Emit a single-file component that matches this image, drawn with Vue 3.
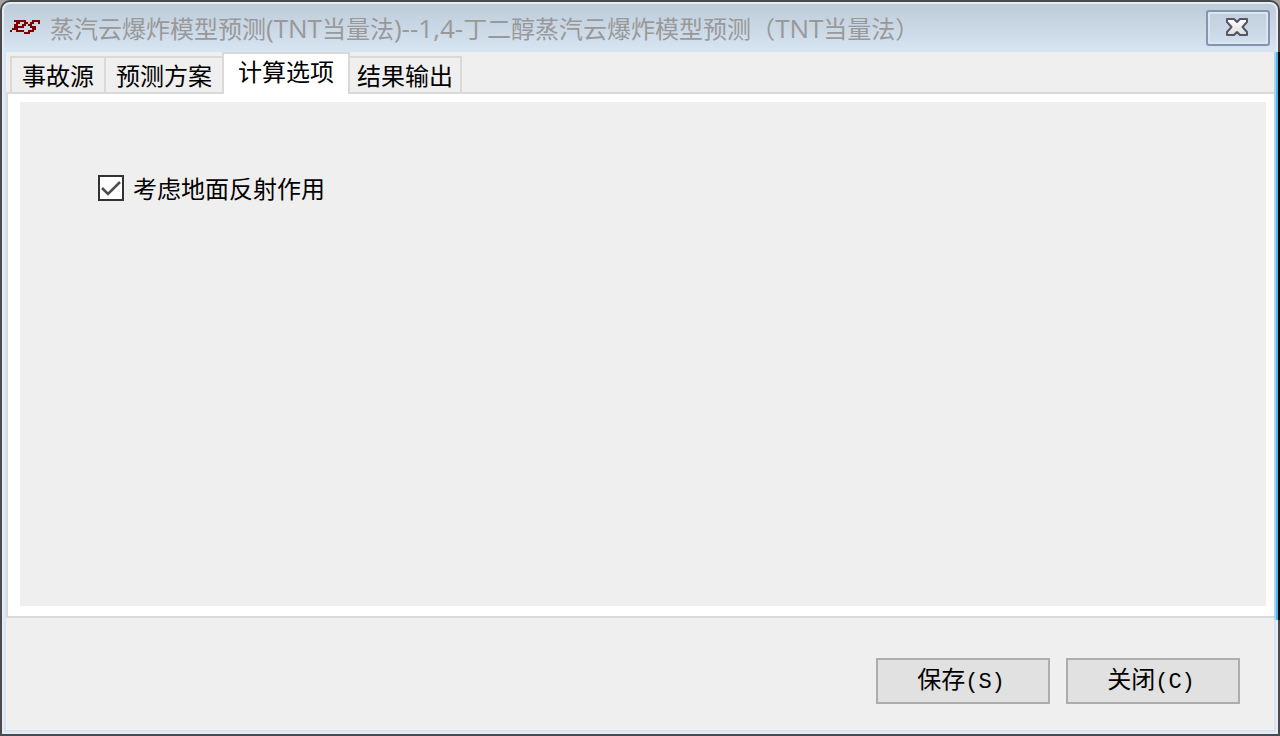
<script setup>
import { ref } from 'vue'

const tabs = [
  { id: 'source', label: '事故源' },
  { id: 'plan', label: '预测方案' },
  { id: 'options', label: '计算选项' },
  { id: 'output', label: '结果输出' }
]
const active = ref('options')
const reflection = ref(true)

const logoRows = [
  '..######...####',
  '...##..##.##..#',
  '..##..##.##....',
  '..#####...###..',
  '.###.......##..',
  '#..####..###...',
  '.......###.....'
]
const logoPath = logoRows
  .flatMap((row, y) => [...row].map((c, x) => (c === '#' ? `M${x} ${y}h1v1h-1z` : '')))
  .join('')
</script>

<template>
  <div class="window">
    <div class="frame">
      <header class="titlebar">
        <svg class="logo" viewBox="0 0 15 7" shape-rendering="crispEdges" aria-hidden="true">
          <path :d="logoPath" fill="#800000" />
        </svg>
        <h1 class="title"><span>蒸汽云爆炸模型预测</span><span class="latin">(TNT</span><span>当量法</span><span class="latin">)--1,4-</span><span>丁二醇蒸汽云爆炸模型预测（</span><span class="latin">TNT</span><span>当量法）</span></h1>
        <button class="close" type="button" aria-label="关闭窗口">
          <svg viewBox="0 0 22 18" aria-hidden="true">
            <defs>
              <linearGradient id="xfill" x1="0" y1="0" x2="0" y2="1">
                <stop offset="0" stop-color="#ffffff" />
                <stop offset="1" stop-color="#dcdcdc" />
              </linearGradient>
            </defs>
            <path d="M1 1H8L11 4L14 1H21V4L16.500 9L21 14V17H14L11 14L8 17H1V14L5.500 9L1 4Z" fill="url(#xfill)" stroke="#535666" stroke-width="2" stroke-linejoin="round" />
          </svg>
        </button>
      </header>

      <main class="client">
        <div class="tabs" role="tablist">
          <button
            v-for="tab in tabs"
            :id="'tab-' + tab.id"
            :key="tab.id"
            type="button"
            role="tab"
            class="tab"
            :class="[tab.id, { selected: tab.id === active }]"
            :aria-selected="tab.id === active"
            @click="active = tab.id"
          >{{ tab.label }}</button>
        </div>
        <section class="pane" role="tabpanel" :aria-labelledby="'tab-' + active">
          <div class="panel">
            <label v-if="active === 'options'" class="check">
              <span class="box">
                <input v-model="reflection" type="checkbox" />
                <svg v-if="reflection" viewBox="0 0 26 26" aria-hidden="true">
                  <path d="M4 13L10 19L22 7" fill="none" stroke="#4d4d4d" stroke-width="2.500" />
                </svg>
              </span>
              <span>考虑地面反射作用</span>
            </label>
          </div>
        </section>
        <footer class="actions">
          <button class="action" type="button">保存<span class="key">(S)</span></button>
          <button class="action" type="button">关闭<span class="key">(C)</span></button>
        </footer>
      </main>
    </div>
    <div class="edge" aria-hidden="true"></div>
  </div>
</template>

<style>
body {
  background: #a3a3a3;
}
</style>

<style scoped>
.window {
  position: relative;
  box-sizing: border-box;
  min-height: 100vh;
  display: flex;
  border: 2px solid #4a4a4a;
  border-radius: 10px 10px 0 0;
  background: #e6ecf5;
  font-family: "Noto Sans CJK SC", sans-serif;
  font-size: 24px;
  line-height: 32px;
  color: #000;
}

button {
  font: inherit;
  color: inherit;
  padding: 0;
}

.frame {
  flex: 1;
  min-width: 0;
  margin: 2px;
  display: flex;
  flex-direction: column;
  border-radius: 6px 6px 0 0;
  background: #d7e4f1;
}

.titlebar {
  display: flex;
  align-items: center;
  height: 48px;
  padding: 0 6px;
  border-radius: 6px 6px 0 0;
  background: linear-gradient(#becbd8, #d7e4f2);
}

.logo {
  width: 30px;
  height: 14px;
  margin-bottom: 2px;
}

.title {
  flex: 1;
  min-width: 0;
  margin: 0 0 0 10px;
  overflow: hidden;
  font-size: 24px;
  font-weight: 400;
  line-height: 40px;
  white-space: nowrap;
  color: #999;
}

.latin {
  font-family: "Open Sans", sans-serif;
  font-size: 26px;
}

.close {
  display: flex;
  align-items: center;
  justify-content: center;
  box-sizing: border-box;
  width: 64px;
  height: 36px;
  padding-right: 2px;
  padding-bottom: 2px;
  border: 2px solid #8794b0;
  border-radius: 3px;
  background: linear-gradient(#c1cedb, #d1deec);
  box-shadow: inset 0 0 0 2px #dbe5ef;
}

.close svg {
  width: 22px;
  height: 18px;
}

.client {
  flex: 1;
  margin: 0 2px 2px;
  display: flex;
  flex-direction: column;
  background: #efefef;
}

.tabs {
  display: flex;
  align-items: flex-end;
  height: 42px;
  padding-left: 4px;
  box-sizing: border-box;
  box-shadow: inset 0 -2px #d9d9d9;
}

.tab {
  box-sizing: border-box;
  width: 118px;
  height: 38px;
  border: 2px solid #d9d9d9;
  background: #efefef;
}

.tab + .tab {
  margin-left: -2px;
}

.tab.source {
  width: 96px;
}

.tab.plan {
  width: 120px;
}

.tab.options {
  width: 128px;
}

.tab.output {
  width: 114px;
}

.tab.selected {
  position: relative;
  height: 42px;
  padding-bottom: 6px;
  border-bottom: 0;
  background: #fff;
}

.pane {
  flex: 1;
  display: flex;
  padding: 8px 8px 10px 12px;
  border: solid #d9d9d9;
  border-width: 0 0 2px 2px;
  background: #fff;
}

.panel {
  flex: 1;
  padding: 70px 78px;
  background: #efefef;
}

.check {
  display: inline-flex;
  align-items: center;
  gap: 9px;
}

.box {
  position: relative;
  display: flex;
}

.box input {
  appearance: none;
  box-sizing: border-box;
  width: 26px;
  height: 26px;
  margin: 0;
  border: 2px solid #333;
  background: #fff;
}

.box svg {
  position: absolute;
  inset: 0;
  pointer-events: none;
}

.actions {
  display: flex;
  justify-content: flex-end;
  gap: 16px;
  padding: 40px 34px 26px;
}

.action {
  box-sizing: border-box;
  width: 174px;
  height: 46px;
  padding: 0 4px 2px 0;
  border: 2px solid #adadad;
  background: #e1e1e1;
}

.key {
  font-family: "Liberation Mono", monospace;
  font-size: 22px;
}

/* Strip of the desktop showing along the right side of the frame */
.edge {
  position: absolute;
  top: 50px;
  right: -2px;
  bottom: 114px;
  width: 6px;
  background: linear-gradient(90deg, #b5d0ea 0 2px, #30c4f2 2px 4px, #000 4px);
}
</style>
